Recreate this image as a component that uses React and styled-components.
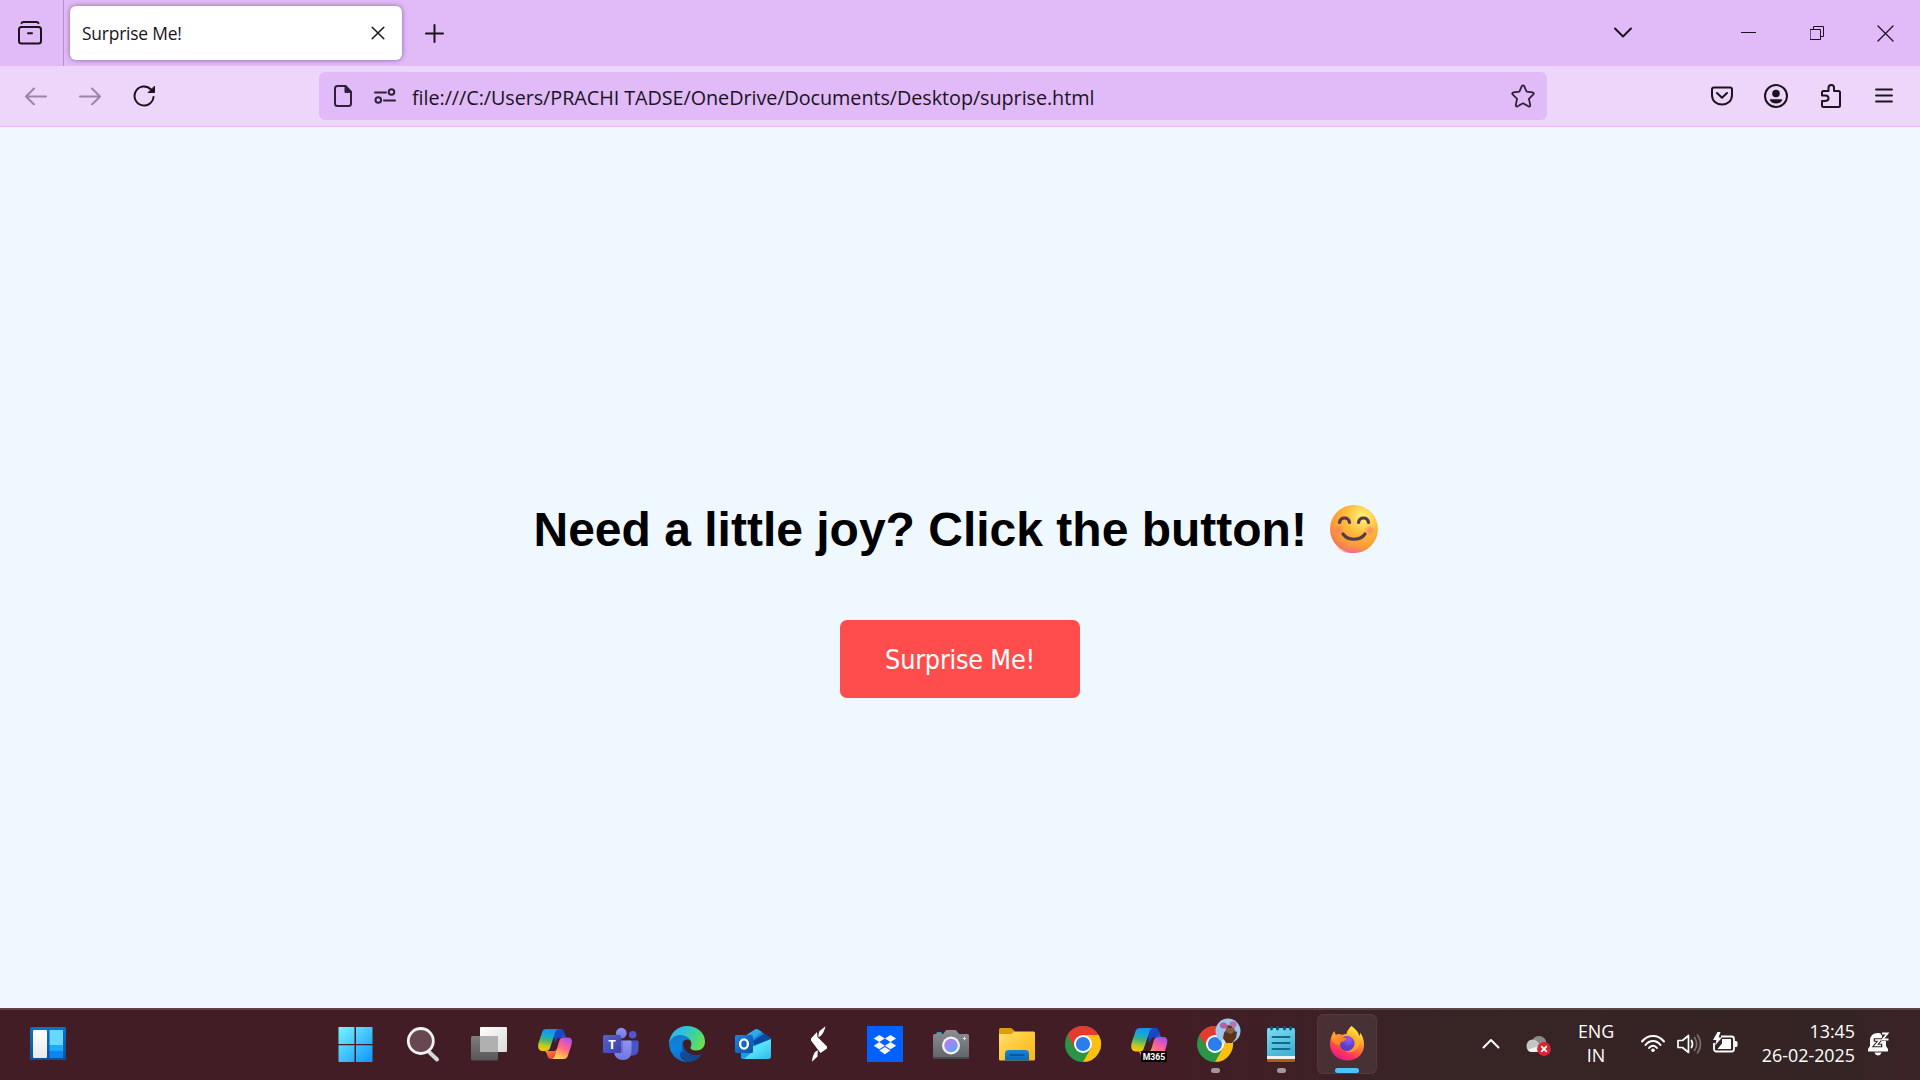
import React from 'react';
import styled, { createGlobalStyle } from 'styled-components';

const UI_FONT = '"Open Sans", "Noto Sans", sans-serif';

const GlobalStyle = createGlobalStyle`
  * { box-sizing: border-box; }
  body { margin: 0; overflow: hidden; font-family: ${UI_FONT}; }
  svg { display: block; flex: none; }
`;

const Screen = styled.div`
  width: 1920px;
  height: 1080px;
  display: flex;
  flex-direction: column;
`;

/* ---------- browser chrome ---------- */
const TabStrip = styled.header`
  height: 66px;
  flex: none;
  display: flex;
  align-items: center;
  background: #e0bbf7;
  color: #1b131f;
`;

const IconButton = styled.button`
  width: ${(p) => p.$w || 54}px;
  height: 100%;
  padding: 0;
  border: 0;
  background: none;
  color: inherit;
  opacity: ${(p) => (p.$dim ? 0.4 : 1)};
  display: flex;
  align-items: center;
  justify-content: center;
  flex: none;
`;

const ViewButton = styled(IconButton)`
  width: 64px;
  padding-right: 3px;
  border-right: 1px solid #b48fc9;
`;

const Tab = styled.div`
  width: 332px;
  height: 54px;
  margin-left: 6px;
  padding: 0 17px 0 12px;
  display: flex;
  align-items: center;
  justify-content: space-between;
  background: #fff;
  border-radius: 6px;
  box-shadow: 0 0 5px rgba(80, 40, 100, 0.6);
`;

const TabTitle = styled.span`
  font-size: 17.4px;
  line-height: 24px;
  letter-spacing: -0.2px;
  white-space: nowrap;
`;

const Spacer = styled.div`
  flex: 1;
`;

const NavBar = styled.nav`
  height: 61px;
  flex: none;
  display: flex;
  align-items: center;
  padding: 0 10px 0 9px;
  background: #eed6fa;
  border-bottom: 1px solid #e0bbf7;
  color: #1b131f;
`;

const UrlBar = styled.div`
  width: 1228px;
  height: 48px;
  margin-left: 148px;
  padding: 0 12px 0 15px;
  display: flex;
  align-items: center;
  border-radius: 6px;
  background: #e0bbf7;
  color: #30203a;
`;

const UrlText = styled.span`
  margin-left: 16px;
  padding-top: 3px;
  font-size: 19.8px;
  line-height: 28px;
  letter-spacing: -0.06px;
  color: #1b131f;
  white-space: nowrap;
  flex: 1;
`;

const Gap = styled.div`
  width: ${(p) => p.$w}px;
  flex: none;
`;

/* ---------- page ---------- */
const Page = styled.main`
  flex: 1;
  display: flex;
  flex-direction: column;
  align-items: center;
  padding-top: 370px;
  background: #f0f8ff;
`;

const Heading = styled.h1`
  margin: 0;
  width: 853px;
  height: 64px;
  padding-right: 9px;
  display: flex;
  align-items: center;
  justify-content: space-between;
  font: bold 48px/64px "Liberation Sans", Arial, sans-serif;
  white-space: nowrap;
  color: #000;
`;

const HeadingText = styled.span`
  padding-top: 2px;
`;

const SurpriseButton = styled.button`
  margin-top: 59px;
  width: 240px;
  height: 78px;
  padding: 1px 0 0;
  border: 0;
  border-radius: 7px;
  background: #ff4d4d;
  color: #fff;
  font: 26.8px/40px "DejaVu Sans Condensed", "DejaVu Sans", sans-serif;
  font-stretch: condensed;
  letter-spacing: -0.25px;
`;

/* ---------- taskbar ---------- */
const Taskbar = styled.footer`
  height: 72px;
  flex: none;
  display: flex;
  align-items: stretch;
  border-top: 2px solid rgba(255, 255, 255, 0.16);
  background: linear-gradient(90deg, #421d25 0, #421d25 1180px, #372425 1450px, #352424 1840px, #3a2226 1920px) border-box;
  color: #fff;
`;

const AppRow = styled.div`
  display: flex;
  gap: 6px;
  padding-top: 4px;
`;

const AppCell = styled.div`
  width: 60px;
  height: 60px;
  display: flex;
  flex-direction: column;
  align-items: center;
  justify-content: space-between;
  padding-top: 12px;
  border-radius: 6px;
  background: ${(p) => (p.$active ? 'rgba(255,255,255,0.07)' : 'none')};
  box-shadow: ${(p) => (p.$active ? 'inset 0 0 0 1px rgba(255,255,255,0.05)' : 'none')};

  &:first-child { margin-right: 2px; }
`;

const Indicator = styled.span`
  width: ${(p) => (p.$active ? 24 : 9)}px;
  height: 5px;
  margin-bottom: 1px;
  border-radius: 3px;
  background: ${(p) => (p.$active ? '#4cc2ff' : '#a3979b')};
`;

const WidgetSlot = styled.div`
  width: 325px;
  flex: none;
  padding: 17px 0 0 30px;
`;

const WithPadding = styled.div`
  flex: none;
  align-self: flex-start;
  padding-top: ${(p) => p.$top}px;
  padding-left: ${(p) => p.$left || 0}px;
`;

const TrayText = styled.div`
  width: ${(p) => p.$w}px;
  padding-top: 9px;
  margin-left: ${(p) => p.$left}px;
  text-align: ${(p) => p.$align};
  font-size: 17.9px;
  line-height: 24px;
  letter-spacing: ${(p) => p.$track}px;
  white-space: nowrap;
  flex: none;
`;

const Stroke = ({ w, h, sw = 2, children, ...rest }) => (
  <svg width={w} height={h} viewBox={`0 0 ${w} ${h}`} fill="none" stroke="currentColor"
    strokeWidth={sw} strokeLinecap="round" strokeLinejoin="round" {...rest}>{children}</svg>
);

const App36 = ({ children }) => (
  <svg width="36" height="36" viewBox="0 0 36 36" overflow="visible">{children}</svg>
);

const Grad = ({ id, stops, x1 = 0, y1 = 0, x2 = 1, y2 = 1 }) => (
  <linearGradient id={id} x1={x1} y1={y1} x2={x2} y2={y2}>
    {stops.map((c, i) => <stop key={i} offset={i / (stops.length - 1)} stopColor={c} />)}
  </linearGradient>
);

const Smile = () => (
  <svg width="48" height="48" viewBox="0 0 48 48">
    <defs>
      <radialGradient id="face" cx="0.68" cy="0.25" r="0.85">
        <stop offset="0" stopColor="#fff478" /><stop offset="0.45" stopColor="#ffb83a" />
        <stop offset="0.75" stopColor="#fb9a37" /><stop offset="1" stopColor="#ef6a62" />
      </radialGradient>
      <radialGradient id="chin" cx="0.5" cy="1" r="0.5">
        <stop offset="0" stopColor="#ef62a8" /><stop offset="0.5" stopColor="#f4788a" stopOpacity="0.35" /><stop offset="1" stopColor="#f58a50" stopOpacity="0" />
      </radialGradient>
      <radialGradient id="blush"><stop offset="0" stopColor="#ff6f70" stopOpacity="0.75" /><stop offset="1" stopColor="#ff8060" stopOpacity="0" /></radialGradient>
    </defs>
    <circle cx="24" cy="24" r="24" fill="url(#face)" />
    <ellipse cx="22" cy="38" rx="20" ry="10" fill="url(#chin)" />
    <circle cx="8" cy="25.500" r="6" fill="url(#blush)" /><circle cx="40" cy="25.500" r="6" fill="url(#blush)" />
    <path d="M9.500 17.500C10.500 11.500 18.500 11.500 19.500 17.500M28.500 17.500C29.500 11.500 37.500 11.500 38.500 17.500M13 29C18 36 30 36 35 29"
      fill="none" stroke="#563a52" strokeWidth="3.200" strokeLinecap="round" />
  </svg>
);

const Widgets = () => (
  <svg width="36" height="33" viewBox="0 0 36 33">
    <defs><Grad id="wb" x2={0} stops={['#0a73c9', '#0d4f9e']} /><Grad id="ww" x2={0} stops={['#ffffff', '#e8e8ea']} /></defs>
    <rect width="36" height="33" rx="1.500" fill="url(#wb)" />
    <rect x="3" y="3" width="14" height="28" rx="1" fill="url(#ww)" />
    <path d="M19.500 3h13.500v15H19.500z" fill="#67d9ff" /><path d="M19.500 18h13.500v6H19.500z" fill="#1fa8ff" /><path d="M19.500 24h13.500v7H19.500z" fill="#0b86ee" />
  </svg>
);

const Start = () => (
  <App36>
    <defs><linearGradient id="st" gradientUnits="userSpaceOnUse" x1="2" y1="1" x2="35" y2="36"><stop stopColor="#78f2ff" /><stop offset="1" stopColor="#0d96ff" /></linearGradient></defs>
    <path fill="url(#st)" d="M1.500 1h16v17h-16zM19 1h16.500v17H19zM1.500 19.300h16V36h-16zM19 19.300h16.500V36H19z" />
  </App36>
);

const Search = () => (
  <App36>
    <path d="M23.500 25.500l8.500 8" stroke="#d5d8dc" strokeWidth="4" strokeLinecap="round" />
    <circle cx="15.800" cy="15" r="12.500" fill="#674850" stroke="#f1f2f4" strokeWidth="2.800" />
  </App36>
);

const TaskView = () => (
  <App36>
    <defs><Grad id="tv" stops={['#fff', '#dadada']} /><Grad id="tg" x2={0} stops={['#7d7d7d', '#575757']} /></defs>
    <rect x="0" y="10" width="27" height="24.500" rx="1.500" fill="url(#tg)" />
    <rect x="9" y="1" width="27" height="25" rx="1" fill="url(#tv)" />
    <path d="M9 10h18v16H10q-1 0-1-1z" fill="#b0b0b0" />
  </App36>
);

const CopilotMark = ({ id }) => (
  <>
    <defs>
      <Grad id={`${id}a`} x1={0.5} x2={0.35} stops={['#1690e8', '#14a8dc', '#43b27c', '#b6c929', '#ffc800']} />
      <Grad id={`${id}b`} stops={['#1453d8', '#1a44c0', '#2b78ee']} />
      <Grad id={`${id}c`} x1={0.7} x2={0.25} stops={['#a553ee', '#e958b0', '#ff6d85', '#ffae55', '#ffd36a']} />
      <Grad id={`${id}d`} x2={0.6} stops={['#ffa12f', '#ff6a3d', '#e8413d']} />
    </defs>
    <path d="M16 3h8c3 0 3.500 5 5 8.500h-5c-4 0-5 3-6 6z" fill={`url(#${id}b)`} />
    <path d="M8 25h10l3-3c-1 6-2 11-7 11-4 0-3-5-6-8z" fill={`url(#${id}d)`} />
    <path d="M9.500 3H21c-2.500 1-3 4-4 7l-4 12c-.7 2-2 3-4 3H5.500C1.500 25 .5 21 1.500 17L5 6.500C5.800 4 7 3 9.500 3z" fill={`url(#${id}a)`} />
    <path d="M26.500 11.500H31c4 0 4.500 3 3.500 7L31 29.500c-.8 2.500-2 3.500-4.500 3.500H15c2.500-1 3-3.500 4-7l3.200-11c.8-2.500 2-3.500 4.300-3.500z" fill={`url(#${id}c)`} />
  </>
);

const Copilot = () => <App36><CopilotMark id="cp" /></App36>;

const M365 = () => (
  <App36>
    <g transform="translate(-1 -1.200) scale(1.070)"><CopilotMark id="cm" /></g>
    <path d="M10 31h26v5H10z" fill="#3c1d24" />
    <rect x="10" y="25" width="26" height="11" rx="1" fill="#050505" />
    <text x="23" y="34" textAnchor="middle" fontFamily="Roboto, sans-serif" fontWeight="700" fontSize="9.800" fill="#fff" textLength="22.500" lengthAdjust="spacingAndGlyphs">M365</text>
  </App36>
);

const Teams = () => (
  <App36>
    <defs><Grad id="tm" x2={0} stops={['#8f94f2', '#7176de']} /><Grad id="tq" stops={['#5a62c8', '#3940ab']} /></defs>
    <circle cx="29.700" cy="8.700" r="3.800" fill="#4f57cd" /><circle cx="18.300" cy="7.200" r="5.400" fill="url(#tm)" />
    <path d="M24 14.500h10c1 0 1.500.6 1.500 1.500v7c0 4-2 6.500-6 6.500H24z" fill="#4b53c6" />
    <path d="M11 14.500h16c1 0 1.500.6 1.500 1.500v9c0 6-3.500 9-8.500 9s-9-3-9-9z" fill="url(#tm)" />
    <path d="M11 27V14.500h9V25q0 2-2 2z" fill="#3d439f" opacity=".35" />
    <rect y="9" width="18" height="18" rx="1.500" fill="url(#tq)" />
    <text x="9" y="22.600" textAnchor="middle" fontFamily="Open Sans, sans-serif" fontWeight="700" fontSize="13" fill="#fff">T</text>
  </App36>
);

const Edge = () => (
  <App36>
    <defs>
      <Grad id="e1" y1={0.3} y2={0.7} stops={['#35b5f0', '#2cc3d8', '#45d58a', '#6fe04a']} />
      <Grad id="e2" x1={0.2} x2={0.5} stops={['#1878c8', '#0a84dd', '#0b6cc6']} />
      <Grad id="e3" stops={['#0c59a4', '#15428a']} />
    </defs>
    <path d="M10.500 12C8 20 9 33 20.500 36c6-.8 10-4 12.500-8.500C27 31 15 29 14 17z" fill="url(#e3)" />
    <path d="M0 17C0 11 5 8.500 10 8.500c6 0 10.500 3 12 6.500-6-4-9.500 1-9 6 .3 2 .7 3.500 1.500 5-3-3-5 3-1 7 2.200 2 4.500 2.800 6.500 3C9 37 0 28 0 17z" fill="url(#e2)" />
    <path d="M0 17C1 7 8.500 0 18 0c10 0 18 6.500 18 15.500 0 6-4 9-8.500 9-4 0-6.700-1.500-5.800-3.500 1.300-3 .8-6-1.700-8.500C14 6.500 3 8 0 17z" fill="url(#e1)" />
  </App36>
);

const Outlook = () => (
  <App36>
    <defs><Grad id="ol" stops={['#34bdf0', '#58e2fa', '#2eb8ee']} /><Grad id="oq" stops={['#1d86dd', '#0a4ea3']} /></defs>
    <path d="M6 13 20 3.500q1.500-.9 3 0L36 12.500V30q0 3-3 3H9q-3 0-3-3z" fill="#1b86d8" />
    <path d="M9 10.500 20 3.500q1.500-.9 3 0L27 6 13 16z" fill="#2fa9ea" />
    <path d="M18 15 29.500 7.500 36 12v2L20 23.500z" fill="#0a4a9e" />
    <path d="M6 25 36 13v17q0 3-3 3H9q-3 0-3-3z" fill="url(#ol)" />
    <path d="M6 23l10-2 0 6-7 6q-3 0-3-3z" fill="#169fdc" />
    <rect y="9" width="18" height="18" rx="1.500" fill="url(#oq)" />
    <ellipse cx="9" cy="18" rx="3.900" ry="4.600" fill="none" stroke="#fff" strokeWidth="2.300" />
  </App36>
);

const Shard = () => (
  <App36>
    <path fill="#fff" d="M24.500.3 18.500 5c-.8 2-1.200 4-1 6.300C21 9.500 23 6.500 24.500.3zM16 6l-6 6.500v2L19.500 27l6.500-4.500v-2L16.500 11zM16.800 24.200 14 26c-1.800 3-2.800 6-3 9.800l5.500-5.200z" />
  </App36>
);

const diamonds = [[12.3, 12.5], [23.5, 12.5], [12.3, 19.7], [23.5, 19.7], [17.9, 24.6]];
const Dropbox = () => (
  <App36>
    <rect width="36" height="36" fill="#0061ff" />
    {diamonds.map(([x, y]) => <path key={`${x}-${y}`} fill="#f7f5f2" d={`M${x - 5.6} ${y}l5.600-3.600 5.600 3.600-5.600 3.600z`} />)}
  </App36>
);

const Camera = () => (
  <App36>
    <defs><Grad id="cb" x2={0} stops={['#8b8f94', '#63676c']} /><Grad id="cl" x1={0.2} stops={['#b77bf0', '#8d8ff0', '#38b8f2']} /></defs>
    <rect x="3.300" y="6" width="5.700" height="4" rx="1.500" fill="#1ea7dc" />
    <path d="M0 9.500Q0 8 1.500 8H10l2.500-3.300q.5-.7 1.500-.7h8q1 0 1.500.7L26 8h8.500Q36 8 36 9.500V31H0z" fill="url(#cb)" />
    <path d="M0 31h36v1q0 1-1 1H1q-1 0-1-1z" fill="#45494e" />
    <circle cx="18" cy="19.500" r="9" fill="#f3f3f5" /><circle cx="18" cy="19.500" r="6.700" fill="url(#cl)" />
    <path d="M31.500 10.800v3.400M29.800 12.500h3.400" stroke="#dfe1e4" strokeWidth="1.100" />
  </App36>
);

const Folder = () => (
  <App36>
    <defs><Grad id="fo" stops={['#ffdf74', '#ffc936', '#f8b41c']} /><Grad id="fb" x2={0} stops={['#1587d6', '#0b68b6']} /></defs>
    <path d="M0 3.500Q0 2 1.500 2h10q1 0 2 1L16 5.500V12H0z" fill="#e09c0c" />
    <path d="M0 8h12.500l3-2.500H34.500q1.500 0 1.500 1.500v26.500q0 1-1 1H1q-1 0-1-1z" fill="url(#fo)" />
    <path d="M6 34.500V27.500Q6 24 9.500 24h17Q30 24 30 27.500v7z" fill="url(#fb)" />
    <path d="M11 29h14" stroke="#0b4f91" strokeWidth="1.600" strokeLinecap="round" />
  </App36>
);

const Chrome = ({ avatar }) => (
  <App36>
    <circle cx="18" cy="18" r="18" fill="#2a9447" />
    <path d="M2.400 9A18 18 0 0 1 33.600 9H18l-7.800 13.500z" fill="#e33b2e" />
    <path d="M33.600 9A18 18 0 0 1 18 36l7.800-13.500L18 9z" fill="#fdc010" />
    <circle cx="18" cy="18" r="9" fill="#fff" /><circle cx="18" cy="18" r="7.100" fill="#2b7de9" />
    {avatar && (
      <g>
        <circle cx="31" cy="5" r="12.500" fill="#9cc6ee" />
        <path d="M27 7l2-3h7l4 2-1 6-4 5h-6l-3-5z" fill="#5b3418" />
        <path d="M28.500-1h8l1.500 6-4 3-5-2z" fill="#8a5a49" />
        <ellipse cx="26.500" cy="-.5" rx="3.500" ry="3" fill="#b5609f" /><ellipse cx="36" cy="-1.500" rx="3.500" ry="3.200" fill="#c070a6" />
        <path d="M24 15l3-1 2 3-3 .5z" fill="#d8e6f5" /><path d="M31 1h4" stroke="#3f2726" strokeWidth="1.500" />
      </g>
    )}
  </App36>
);

const Notepad = () => (
  <App36>
    <defs><Grad id="np" x2={0.5} stops={['#7fdcf0', '#43b5d6']} /></defs>
    <path d="M4 31h28v3.500q0 1.500-1.500 1.500h-25Q4 36 4 34.500z" fill="#b35a10" />
    <path d="M4 29h28v4H4z" fill="#eef2f4" />
    <path d="M4 3.500Q4 2 5.500 2h25Q32 2 32 3.500V30H4z" fill="url(#np)" />
    <path d="M8.500 1.500V3M14.500 1.500V3M21.500 1.500V3M27.500 1.500V3" stroke="#0c5876" strokeWidth="2.800" strokeLinecap="round" />
    <path d="M9.500 11h17M9.500 17h17M9.500 23h17" stroke="#126b8d" strokeWidth="2" strokeLinecap="round" />
  </App36>
);

const Firefox = () => (
  <App36>
    <defs>
      <Grad id="ff" x1={0.8} x2={0.3} stops={['#fff44f', '#ffc22f', '#ff7a2e', '#ff3a55', '#e3168c']} />
      <radialGradient id="fp" cx=".6" cy=".25"><stop stopColor="#9a5cf4" /><stop offset="1" stopColor="#5540c8" /></radialGradient>
      <Grad id="fx" stops={['#ffb52e', '#ff8a26', '#ff6330']} />
    </defs>
    <path d="M22.500 0c4 2.500 7 6.500 8 10 .6-1 .8-2 .5-3.500 3 3.500 4 8 4 12.500C35 28 28 34.500 18.500 34.500S1 28 1 18C1 13 2.500 8 5.500 5c0 2 .4 3.300 1.300 4C9 7.500 11 7.500 13 9c2-1 3-1 4.500-1 .5-3.500 3-6 5-8z" fill="url(#ff)" />
    <circle cx="18" cy="17.500" r="7.500" fill="url(#fp)" />
    <path d="M6 5.500c0 2.500.5 3.500 1.500 3.800C9.500 8.500 11 8.500 13 10c.5 1.500 2 2 4.500 2.200.3 1.600-1.500 2.600-5 3.800-1.500 1-1.500 2-1.200 3.500C6.500 19 3.500 16.500 2.500 13 3 10 4 7.500 6 5.500z" fill="url(#fx)" />
    <path d="M23 9c2.500 2 3.500 5 3 8-.5 5-5 8.500-9.500 8.500 7 2.500 13.500-2 14-8.500.2-3-1.500-6-4-8z" fill="#ffb52f" opacity=".65" />
  </App36>
);

const apps = [
  { name: 'start', Icon: Start }, { name: 'search', Icon: Search }, { name: 'tasks', Icon: TaskView },
  { name: 'copilot', Icon: Copilot }, { name: 'teams', Icon: Teams }, { name: 'edge', Icon: Edge },
  { name: 'outlook', Icon: Outlook }, { name: 'shard', Icon: Shard }, { name: 'dropbox', Icon: Dropbox },
  { name: 'camera', Icon: Camera }, { name: 'folder', Icon: Folder }, { name: 'chrome', Icon: Chrome },
  { name: 'm365', Icon: M365 }, { name: 'profile', Icon: () => <Chrome avatar />, running: true },
  { name: 'notepad', Icon: Notepad, running: true }, { name: 'firefox', Icon: Firefox, running: true, active: true },
];

export default function App() {
  return (
    <Screen>
      <GlobalStyle />
      <TabStrip>
        <ViewButton>
          <Stroke w={26} h={26} sw={2}>
            <path d="M4.500 3.200Q5 2 6.500 2h13Q21 2 21.500 3.200" /><rect x="2" y="7" width="22" height="16.500" rx="2.500" /><path d="M11 13.300h4" />
          </Stroke>
        </ViewButton>
        <Tab>
          <TabTitle>Surprise Me!</TabTitle>
          <Stroke w={14} h={14} sw={1.5}><path d="M1.200 1.200l11.600 11.600M12.800 1.200 1.200 12.800" /></Stroke>
        </Tab>
        <IconButton $w={65}><Stroke w={19} h={20} sw={2}><path d="M9.500 2v17M1 10.500h17" /></Stroke></IconButton>
        <Spacer />
        <IconButton $w={54}><Stroke w={20} h={12} sw={2}><path d="M2 1.500l8 8 8-8" /></Stroke></IconButton>
        <Gap $w={64} />
        <IconButton $w={69}><Stroke w={15} h={2} sw={1} strokeLinecap="butt"><path d="M0 .5h15" /></Stroke></IconButton>
        <IconButton $w={68}>
          <Stroke w={14} h={14} sw={1} strokeLinejoin="miter"><path d="M.5 3.500h10v10H.5zM3.500 3.500v-3h10v10h-3" /></Stroke>
        </IconButton>
        <IconButton $w={69}><Stroke w={17} h={17} sw={1.3}><path d="M1 1l15 15M16 1 1 16" /></Stroke></IconButton>
      </TabStrip>

      <NavBar>
        <IconButton $dim><Stroke w={22} h={18} sw={2}><path d="M21 9.500H1.500M9 1.500l-8 8 8 8" /></Stroke></IconButton>
        <IconButton $dim><Stroke w={22} h={18} sw={2}><path d="M1 9.500h19.500M13 1.500l8 8-8 8" /></Stroke></IconButton>
        <IconButton>
          <Stroke w={23} h={22} sw={2}><path d="M20.500 12A9.500 9.500 0 1 1 18 4.500" /><path d="M21.500 1.500V7.500h-6z" fill="currentColor" strokeWidth="1" /></Stroke>
        </IconButton>
        <UrlBar>
          <Stroke w={18} h={22} sw={2}>
            <path d="M11.500 1H3.500Q1 1 1 3.500v15Q1 21 3.500 21h11q2.500 0 2.500-2.500V7z" /><path d="M11.500 1.500V7H17z" fill="currentColor" />
          </Stroke>
          <Gap $w={22} />
          <Stroke w={22} h={16} sw={2}><path d="M1 4.500h11M10 12.500h11" /><circle cx="17.500" cy="4" r="2.800" /><circle cx="4.300" cy="12" r="2.800" /></Stroke>
          <UrlText>file:///C:/Users/PRACHI TADSE/OneDrive/Documents/Desktop/suprise.html</UrlText>
          <Stroke w={24} h={24} sw={1.8}>
            <path d="M10.700 2.300q1.300-2 2.600 0l2.300 5.300 5.800.8q2.300.5.700 2.300l-4.200 4.200 1.300 6q.2 2.200-1.800 1.400L12 19.300l-5.400 3q-2 .8-1.800-1.400l1.300-6-4.200-4.200Q.3 8.900 2.600 8.400l5.800-.8z" />
          </Stroke>
        </UrlBar>
        <Spacer />
        <IconButton>
          <Stroke w={22} h={20} sw={2}><path d="M3 1.500h16q2 0 2 2V9c0 6-4.500 9.500-10 9.500S1 15 1 9V3.500q0-2 2-2z" /><path d="M6 7l5 4.800L16 7" /></Stroke>
        </IconButton>
        <IconButton>
          <Stroke w={24} h={24} sw={2}>
            <circle cx="12" cy="12" r="11" /><circle cx="12" cy="9.500" r="3.800" fill="currentColor" stroke="none" />
            <path d="M6.500 15.200h11q1 0 .6 1C17 18.500 14.500 19.500 12 19.500s-5-1-6.100-3.300q-.4-1 .6-1z" fill="currentColor" stroke="none" />
          </Stroke>
        </IconButton>
        <IconButton $w={55}>
          <Stroke w={20} h={24} sw={2}>
            <path d="M1 8.500Q1 7 2.500 7H7.500V4q0-3 2.800-3T13 4v3h4.500Q19 7 19 8.500v13q0 1.500-1.500 1.500h-15Q1 23 1 21.500V17h3q3.500 0 3.500-2.800T4 11.500H1z" />
          </Stroke>
        </IconButton>
        <IconButton $w={52}><Stroke w={18} h={16} sw={1.8}><path d="M1 1.500h16M1 7.500h16M1 13.500h16" /></Stroke></IconButton>
      </NavBar>

      <Page>
        <Heading><HeadingText>Need a little joy? Click the button!</HeadingText><Smile /></Heading>
        <SurpriseButton>Surprise Me!</SurpriseButton>
      </Page>

      <Taskbar>
        <WidgetSlot><Widgets /></WidgetSlot>
        <AppRow>
          {apps.map(({ name, Icon, running, active }) => (
            <AppCell key={name} $active={active}>
              <Icon />
              {running && <Indicator $active={active} />}
            </AppCell>
          ))}
        </AppRow>
        <Spacer />
        <WithPadding $top={28}><Stroke w={18} h={11} sw={2}><path d="M1.500 9.500 9 2l7.500 7.500" /></Stroke></WithPadding>
        <WithPadding $top={24} $left={26}>
          <svg width="25" height="22" viewBox="0 0 25 22">
            <path d="M7 6Q8 2 13 2q5 0 7 5 1 3-1 6L9 9z" fill="#8c8a8a" />
            <path d="M6 5.500q4-.5 6.500 3.500L21 14q-1 4-5 4H6q-5 0-5.500-5.500Q.5 6.500 6 5.500z" fill="#c6c5c5" />
            <path d="M2 15.500 13 12v6H6q-2.500 0-4-2.500z" fill="#f1f1f1" />
            <circle cx="18" cy="15" r="6.900" fill="#d92332" /><path d="M15.200 12.200l5.600 5.600M20.800 12.200l-5.600 5.600" stroke="#fff" strokeWidth="1.800" />
          </svg>
        </WithPadding>
        <TrayText $w={60} $left={15} $align="center" $track={-0.1}>ENG<br />IN</TrayText>
        <WithPadding $top={24} $left={15}>
          <Stroke w={24} h={19} sw={2}>
            <path d="M1 7.500Q5.500 2 12 2t11 5.500M4.500 11Q7.500 7 12 7t7.500 4M8 14q1.500-2.200 4-2.200T16 14" /><circle cx="12" cy="16.200" r="1.800" fill="#fff" stroke="none" />
          </Stroke>
        </WithPadding>
        <WithPadding $top={24} $left={12}>
          <Stroke w={25} h={20} sw={1.7}>
            <path d="M1 6.500h4.500l6-5v17l-6-5H1z" /><path d="M14.500 6.500q2 3.500 0 7" />
            <path d="M17.500 3.500q4.500 6.500 0 13M20.500 1q6 9 0 18" opacity=".35" />
          </Stroke>
        </WithPadding>
        <WithPadding $top={22} $left={11}>
          <svg width="25" height="21" viewBox="0 0 25 21">
            <path d="M8 4.500h10.500Q21 4.500 21 7v10q0 2.500-2.500 2.500h-15Q1 19.500 1 17v-6" fill="none" stroke="#fff" strokeWidth="1.800" />
            <path d="M9 7h9v10H4.500L9 11.500z" fill="#fff" /><path d="M22 9h1q1.500 0 1.500 1.500v3Q24.500 15 23 15h-1z" fill="#fff" />
            <path d="M4.500 0 0 8h3.500L2 13.500 9 5.500H5.500L7.500 0z" fill="#fff" />
          </svg>
        </WithPadding>
        <TrayText $w={104} $left={13} $align="right" $track={-0.02}>13:45<br />26-02-2025</TrayText>
        <WithPadding $top={22} $left={13}>
          <svg width="52" height="24" viewBox="0 0 52 24">
            <path d="M0 19.500V17l2-3V9q0-8 8-8 2 0 4 1v4h4v8l2 3v2.500zM6.500 20.500h7Q12.500 23.500 10 23.500t-3.500-3z" fill="#fff" />
            <path d="M7.500 8h4.500l-4.500 5.500H12.500" fill="none" stroke="#352424" strokeWidth="3.600" strokeLinecap="square" />
            <path d="M14.500 1.500h5l-5 6H20" fill="none" stroke="#352424" strokeWidth="3.200" strokeLinecap="square" />
            <path d="M7 8h5L7.500 13.500H13" fill="none" stroke="#fff" strokeWidth="1.600" />
            <path d="M14 1.500h5.500L14.500 7.500h6" fill="none" stroke="#fff" strokeWidth="1.800" />
          </svg>
        </WithPadding>
      </Taskbar>
    </Screen>
  );
}
